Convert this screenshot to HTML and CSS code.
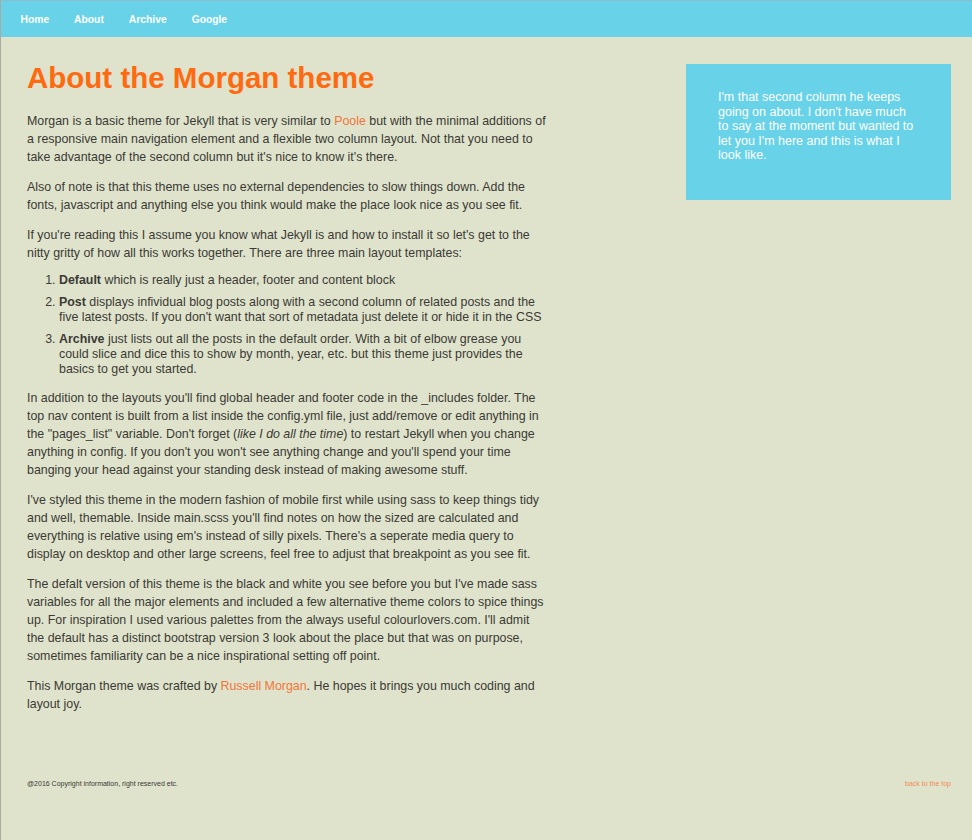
FILE: index.html
```html
<!DOCTYPE html>
<html>
<head>
<meta charset="utf-8">
<link rel="stylesheet" href="styles.css">
</head>
<body>
<div class="page">
  <nav class="nav">
    <a href="#">Home</a>
    <a href="#">About</a>
    <a href="#">Archive</a>
    <a href="#">Google</a>
  </nav>
  <div class="wrap">
    <main class="main">
      <h1 class="title">About the Morgan theme</h1>
      <p>Morgan is a basic theme for Jekyll that is very similar to <a class="link" href="#">Poole</a> but with the minimal additions of a responsive main navigation element and a flexible two column layout. Not that you need to take advantage of the second column but it's nice to know it's there.</p>
      <p>Also of note is that this theme uses no external dependencies to slow things down. Add the fonts, javascript and anything else you think would make the place look nice as you see fit.</p>
      <p>If you're reading this I assume you know what Jekyll is and how to install it so let's get to the nitty gritty of how all this works together. There are three main layout templates:</p>
      <ol class="list">
        <li><strong>Default</strong> which is really just a header, footer and content block</li>
        <li><strong>Post</strong> displays infividual blog posts along with a second column of related posts and the five latest posts. If you don't want that sort of metadata just delete it or hide it in the CSS</li>
        <li><strong>Archive</strong> just lists out all the posts in the default order. With a bit of elbow grease you could slice and dice this to show by month, year, etc. but this theme just provides the basics to get you started.</li>
      </ol>
      <p>In addition to the layouts you'll find global header and footer code in the _includes folder. The top nav content is built from a list inside the config.yml file, just add/remove or edit anything in the "pages_list" variable. Don't forget (<em>like I do all the time</em>) to restart Jekyll when you change anything in config. If you don't you won't see anything change and you'll spend your time banging your head against your standing desk instead of making awesome stuff.</p>
      <p>I've styled this theme in the modern fashion of mobile first while using sass to keep things tidy and well, themable. Inside main.scss you'll find notes on how the sized are calculated and everything is relative using em's instead of silly pixels. There's a seperate media query to display on desktop and other large screens, feel free to adjust that breakpoint as you see fit.</p>
      <p>The defalt version of this theme is the black and white you see before you but I've made sass variables for all the major elements and included a few alternative theme colors to spice things up. For inspiration I used various palettes from the always useful colourlovers.com. I'll admit the default has a distinct bootstrap version 3 look about the place but that was on purpose, sometimes familiarity can be a nice inspirational setting off point.</p>
      <p>This Morgan theme was crafted by <a class="link" href="#">Russell Morgan</a>. He hopes it brings you much coding and layout joy.</p>
    </main>
    <aside class="side">
      <p>I'm that second column he keeps going on about. I don't have much to say at the moment but wanted to let you I'm here and this is what I look like.</p>
    </aside>
  </div>
  <footer class="foot">
    <span>@2016 Copyright information, right reserved etc.</span>
    <a class="top" href="#">back to the top</a>
  </footer>
</div>
</body>
</html>
```
FILE: styles.css
```css
html, body {
  margin: 0;
  padding: 0;
  height: 100%;
}
body {
  background: #e0e3cb;
  font-family: "Liberation Sans", Arial, sans-serif;
  color: #3a3a36;
}
.page {
  min-height: 100%;
  border-left: 1px solid #a9aba0;
  border-top: 1px solid #8fbccb;
  box-sizing: border-box;
}
.nav {
  background: #68d2e8;
  height: 36px;
  display: flex;
  align-items: center;
  padding-left: 7px;
}
.nav a {
  font-weight: bold;
  font-size: 10.3px;
  color: #fff;
  text-decoration: none;
  padding: 0 12.5px;
}
.wrap {
  display: flex;
  justify-content: space-between;
  padding: 25px 21px 0 26px;
}
.main {
  width: 521px;
  font-size: 12.4px;
  line-height: 18px;
}
.title {
  color: #ff6a10;
  font-size: 29.5px;
  line-height: 32px;
  margin: 0 0 18px;
}
.main p {
  margin: 0 0 12px;
}
.link {
  color: #f2763a;
  text-decoration: none;
}
.list {
  margin: -1px 0 12px;
  padding-left: 32px;
  line-height: 15px;
}
.list li {
  margin-bottom: 7px;
}
.side {
  width: 265px;
  align-self: flex-start;
  margin-top: 2px;
  background: #68d2e8;
  color: #fff;
  font-size: 12.5px;
  line-height: 14.5px;
  padding: 26px 34px 37px 32px;
  box-sizing: border-box;
}
.side p {
  margin: 0;
}
.foot {
  display: flex;
  justify-content: space-between;
  align-items: center;
  padding: 55px 21px 0 26px;
  font-size: 7px;
}
.top {
  color: #f08a5a;
  text-decoration: none;
}
```
